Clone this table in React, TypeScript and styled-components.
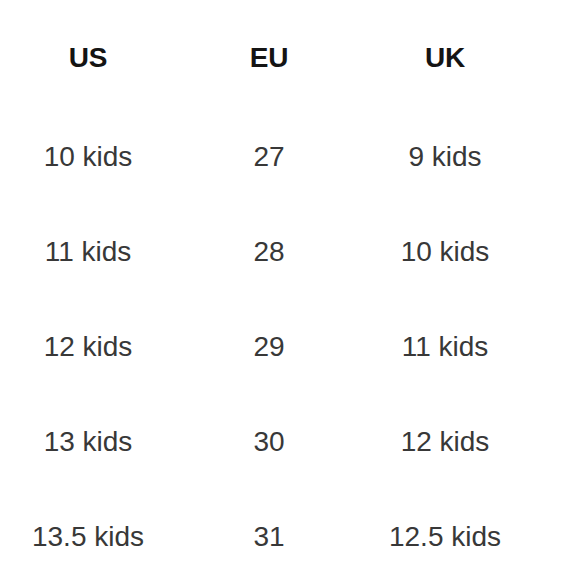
import React from "react";
import styled, { createGlobalStyle } from "styled-components";

const GlobalStyle = createGlobalStyle`
  html, body {
    margin: 0;
    padding: 0;
    background: #ffffff;
  }
  body {
    font-family: "Liberation Sans", Arial, sans-serif;
  }
`;

const Table = styled.div`
  display: grid;
  grid-template-columns: 176px 186px 166px;
  grid-template-rows: 102px repeat(5, 95px);
  padding-top: 7px;
  width: 580px;
  box-sizing: border-box;
`;

const Cell = styled.div<{ $head?: boolean }>`
  display: flex;
  align-items: center;
  justify-content: center;
  font-size: 28px;
  white-space: nowrap;
  font-weight: ${(p) => (p.$head ? 700 : 400)};
  color: ${(p) => (p.$head ? "#141414" : "#383838")};
  letter-spacing: ${(p) => (p.$head ? "-0.2px" : "0")};
`;

const headers = ["US", "EU", "UK"];
const rows: [string, string, string][] = [
  ["10 kids", "27", "9 kids"],
  ["11 kids", "28", "10 kids"],
  ["12 kids", "29", "11 kids"],
  ["13 kids", "30", "12 kids"],
  ["13.5 kids", "31", "12.5 kids"],
];

export default function App() {
  return (
    <>
      <GlobalStyle />
      <Table>
        {headers.map((h) => (
          <Cell key={h} $head>
            {h}
          </Cell>
        ))}
        {rows.map((r, i) =>
          r.map((v, j) => <Cell key={`${i}-${j}`}>{v}</Cell>)
        )}
      </Table>
    </>
  );
}
